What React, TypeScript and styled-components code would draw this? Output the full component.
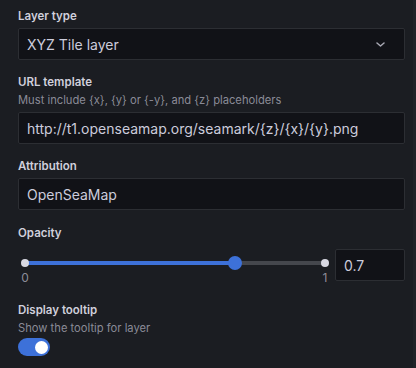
import React, {useState} from 'react';
import styled, {createGlobalStyle} from 'styled-components';

const GlobalStyle = createGlobalStyle`
    html, body {
        margin: 0;
        padding: 0;
        background: #202227;
    }
    body {
        font-family: Inter, Roboto, "Noto Sans", sans-serif;
        color: #ccccdc;
        -webkit-font-smoothing: antialiased;
    }
`;

const Pane = styled.div`
    width: 413px;
    height: 368px;
    box-sizing: border-box;
    background: #1b1d22;
    padding: 9px 8px 0 18px;
`;

const Field = styled.div<{ $gap?: number }>`
    margin-bottom: ${p => p.$gap ?? 15}px;
`;

const LabelBlock = styled.div<{ $gap?: number }>`
    margin-bottom: ${p => p.$gap ?? 4}px;
`;

const Label = styled.div`
    font-size: 11.5px;
    font-weight: 600;
    line-height: 15px;
    color: #d0d0dc;
`;

const Description = styled.div`
    font-size: 11.2px;
    line-height: 15px;
    margin-top: 3px;
    color: rgba(204, 204, 220, 0.64);
`;

const Box = styled.div<{ $width?: number }>`
    box-sizing: border-box;
    height: 32px;
    width: ${p => (p.$width ? `${p.$width}px` : '100%')};
    display: flex;
    align-items: center;
    justify-content: space-between;
    padding: 0 8px 0 8px;
    background: #111217;
    border: 1px solid #2c2e33;
    border-radius: 2px;
    font-size: 14px;
    color: #ccccdc;
    flex-shrink: 0;
`;

const Chevron = styled.svg`
    margin-right: 11px;
`;

const SliderRow = styled.div`
    display: flex;
    align-items: flex-start;
    gap: 3px;
    padding-top: 4px;
`;

const SliderArea = styled.div`
    flex: 1;
    padding: 0 7px;
`;

const Rail = styled.div`
    position: relative;
    height: 4px;
    margin-top: 12px;
    border-radius: 2px;
    background: #45474d;
`;

const Track = styled.div`
    position: absolute;
    left: 0;
    top: 0;
    height: 4px;
    border-radius: 2px;
    background: #3d71d9;
`;

const Dot = styled.div<{ $at: number }>`
    position: absolute;
    top: -2px;
    left: ${p => p.$at}%;
    width: 8px;
    height: 8px;
    margin-left: -4px;
    border-radius: 50%;
    background: #d8d8e2;
`;

const Thumb = styled.div`
    position: absolute;
    top: -5px;
    width: 14px;
    height: 14px;
    margin-left: -7px;
    border-radius: 50%;
    background: #3d71d9;
`;

const Marks = styled.div`
    display: flex;
    justify-content: space-between;
    margin: 5px -4px 0 -4px;
    font-size: 12px;
    line-height: 15px;
    color: rgba(204, 204, 220, 0.65);
`;

const Mark = styled.span`
    width: 8px;
    text-align: center;
`;

const SwitchTrack = styled.div<{ $on: boolean }>`
    width: 32px;
    height: 18px;
    border-radius: 9px;
    background: ${p => (p.$on ? '#3d71d9' : '#2c2e33')};
    display: flex;
    align-items: center;
    justify-content: ${p => (p.$on ? 'flex-end' : 'flex-start')};
    padding: 0 2px;
    box-sizing: border-box;
`;

const Knob = styled.div`
    width: 13px;
    height: 13px;
    border-radius: 50%;
    background: #ffffff;
`;

function FieldLabel({label, description, gap}: { label: string; description?: string; gap?: number }) {
    return <LabelBlock $gap={gap}>
        <Label>{label}</Label>
        {description && <Description>{description}</Description>}
    </LabelBlock>;
}

export default function App() {
    const [opacity] = useState(0.7);
    const [tooltip, setTooltip] = useState(true);
    const pct = opacity * 100;

    return <>
        <GlobalStyle/>
        <Pane>
            <Field>
                <FieldLabel label="Layer type"/>
                <Box>
                    <span>XYZ Tile layer</span>
                    <Chevron width="9" height="5" viewBox="0 0 9 5">
                        <path d="M1 1 L4.5 4 L8 1" fill="none" stroke="#a8a8b4" strokeWidth="1.5" strokeLinecap="round" strokeLinejoin="round"/>
                    </Chevron>
                </Box>
            </Field>
            <Field>
                <FieldLabel label="URL template" description="Must include {x}, {y} or {-y}, and {z} placeholders"/>
                <Box>http://t1.openseamap.org/seamark/{'{z}'}/{'{x}'}/{'{y}'}.png</Box>
            </Field>
            <Field $gap={16}>
                <FieldLabel label="Attribution"/>
                <Box>OpenSeaMap</Box>
            </Field>
            <Field $gap={18}>
                <FieldLabel label="Opacity"/>
                <SliderRow>
                    <SliderArea>
                        <Rail>
                            <Track style={{width: `${pct}%`}}/>
                            <Dot $at={0}/>
                            <Dot $at={100}/>
                            <Thumb style={{left: `${pct}%`}}/>
                        </Rail>
                        <Marks>
                            <Mark>0</Mark>
                            <Mark>1</Mark>
                        </Marks>
                    </SliderArea>
                    <Box $width={70}>{opacity}</Box>
                </SliderRow>
            </Field>
            <Field>
                <FieldLabel label="Display tooltip" description="Show the tooltip for layer" gap={2}/>
                <SwitchTrack $on={tooltip} onClick={() => setTooltip(!tooltip)}>
                    <Knob/>
                </SwitchTrack>
            </Field>
        </Pane>
    </>;
}
